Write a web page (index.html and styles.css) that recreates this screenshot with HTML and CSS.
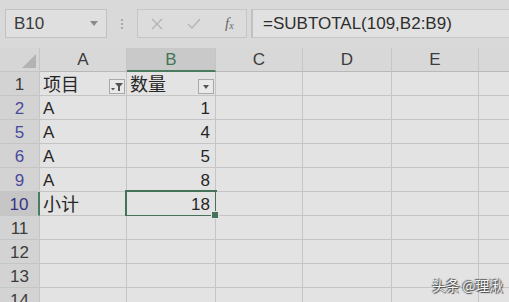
FILE: index.html
```html
<!DOCTYPE html>
<html lang="zh">
<head>
<meta charset="utf-8">
<link rel="stylesheet" href="styles.css">
</head>
<body>
<div class="app">
  <div class="toolbar">
    <div class="namebox">
      <span class="name">B10</span>
      <svg class="caret" width="8" height="5" viewBox="0 0 8 5"><path d="M0 0h8L4 5z" fill="#8a8a8a"/></svg>
    </div>
    <div class="dots"><i></i><i></i><i></i></div>
    <div class="fxbox">
      <svg class="ic" width="12" height="12" viewBox="0 0 12 12"><path d="M1 1l10 10M11 1L1 11" stroke="#b4b4b4" stroke-width="1.4" fill="none"/></svg>
      <svg class="ic" width="14" height="11" viewBox="0 0 14 11"><path d="M1 6l4 4 8-9" stroke="#b4b4b4" stroke-width="1.4" fill="none"/></svg>
      <span class="fx">f<sub>x</sub></span>
    </div>
    <div class="formula">=SUBTOTAL(109,B2:B9)</div>
  </div>
  <div class="sheet">
    <div class="corner"><svg width="14" height="14" viewBox="0 0 14 14"><path d="M14 0v14H0z" fill="#b3b3b3"/></svg></div>
    <div class="ch">A</div>
    <div class="ch sel">B</div>
    <div class="ch">C</div>
    <div class="ch">D</div>
    <div class="ch">E</div>
    <div class="ch last"></div>

    <div class="rh">1</div>
    <div class="c zh">项目<span class="fbtn active"><svg width="14" height="13" viewBox="0 0 14 13"><path d="M1 8h4L3 10.5z" fill="#555"/><path d="M5 3h8L10 6.5V11H8V6.5z" fill="#555"/></svg></span></div>
    <div class="c zh">数量<span class="fbtn"><svg width="14" height="13" viewBox="0 0 14 13"><path d="M4 5h6L7 9z" fill="#555"/></svg></span></div>
    <div class="c"></div><div class="c"></div><div class="c"></div><div class="c last"></div>

    <div class="rh blue">2</div>
    <div class="c">A</div><div class="c num">1</div>
    <div class="c"></div><div class="c"></div><div class="c"></div><div class="c last"></div>

    <div class="rh blue">5</div>
    <div class="c">A</div><div class="c num">4</div>
    <div class="c"></div><div class="c"></div><div class="c"></div><div class="c last"></div>

    <div class="rh blue">6</div>
    <div class="c">A</div><div class="c num">5</div>
    <div class="c"></div><div class="c"></div><div class="c"></div><div class="c last"></div>

    <div class="rh blue">9</div>
    <div class="c">A</div><div class="c num">8</div>
    <div class="c"></div><div class="c"></div><div class="c"></div><div class="c last"></div>

    <div class="rh blue selrow">10</div>
    <div class="c zh">小计</div><div class="c num active-cell">18<span class="handle"></span></div>
    <div class="c"></div><div class="c"></div><div class="c"></div><div class="c last"></div>

    <div class="rh">11</div>
    <div class="c"></div><div class="c"></div><div class="c"></div><div class="c"></div><div class="c"></div><div class="c last"></div>

    <div class="rh">12</div>
    <div class="c"></div><div class="c"></div><div class="c"></div><div class="c"></div><div class="c"></div><div class="c last"></div>

    <div class="rh">13</div>
    <div class="c"></div><div class="c"></div><div class="c"></div><div class="c"></div><div class="c"></div><div class="c last"></div>

    <div class="rh">14</div>
    <div class="c"></div><div class="c"></div><div class="c"></div><div class="c"></div><div class="c"></div><div class="c last"></div>
  </div>
  <div class="watermark">头条 @理湫</div>
</div>
</body>
</html>
```
FILE: styles.css
```css
html, body {
  margin: 0;
  padding: 0;
}
body {
  width: 509px;
  height: 302px;
  overflow: hidden;
  background: #e2e2e2;
  font-family: "Liberation Sans", "Noto Sans CJK SC", sans-serif;
  color: #262626;
}
.app {
  position: relative;
  width: 509px;
  height: 302px;
  overflow: hidden;
}
.toolbar {
  height: 48px;
  box-sizing: border-box;
  padding-top: 9px;
  display: flex;
  align-items: flex-start;
  background: #d9d9d9;
}
.namebox {
  margin-left: 5px;
  width: 102px;
  height: 29px;
  box-sizing: border-box;
  border: 1px solid #c2c2c2;
  background: #dfdfdf;
  display: flex;
  align-items: center;
  padding-left: 8px;
  padding-right: 8px;
}
.name {
  font-size: 17px;
  color: #3a3a3a;
  flex: 1;
}
.dots {
  width: 30px;
  height: 29px;
  display: flex;
  flex-direction: column;
  align-items: center;
  justify-content: center;
  gap: 2px;
}
.dots i {
  display: block;
  width: 2px;
  height: 2px;
  background: #a9a9a9;
}
.fxbox {
  width: 110px;
  height: 29px;
  box-sizing: border-box;
  border: 1px solid #c6c6c6;
  background: #dcdcdc;
  display: flex;
  align-items: center;
  padding-left: 13px;
  gap: 24px;
}
.fx {
  font-family: "Liberation Serif", serif;
  font-style: italic;
  font-size: 15px;
  color: #6a6a6a;
  margin-left: 0;
}
.fx sub {
  font-size: 10px;
  vertical-align: -1px;
}
.formula {
  margin-left: 4px;
  flex: 1;
  height: 29px;
  box-sizing: border-box;
  border: 1px solid #c6c6c6;
  border-right: none;
  border-left: 2px solid #c0c0c0;
  background: #e1e1e1;
  font-size: 17px;
  line-height: 27px;
  padding-left: 10px;
  color: #2e2e2e;
}
.sheet {
  display: grid;
  grid-template-columns: 40px 87px 89px 87px 89px 87px 1fr;
  grid-auto-rows: 24px;
  font-size: 17px;
}
.sheet > div {
  box-sizing: border-box;
  border-right: 1px solid #c5c5c5;
  border-bottom: 1px solid #c5c5c5;
}
.sheet > .last {
  border-right: none;
}
.corner {
  background: #d6d6d6;
  display: flex;
  align-items: flex-end;
  justify-content: flex-end;
  padding: 0 3px 3px 0;
}
.corner svg {
  display: block;
}
.ch {
  background: #d8d8d8;
  text-align: center;
  line-height: 24px;
  color: #3c3c3c;
  border-bottom-color: #b8b8b8 !important;
}
.ch.sel {
  background: #c9c9c9;
  color: #467458;
  border-bottom: 2px solid #4b7b60 !important;
  line-height: 23px;
}
.rh {
  background: #d3d3d3;
  text-align: center;
  color: #3c3c3c;
  line-height: 20px;
  padding-top: 3px;
}
.rh.blue {
  color: #4a4a9c;
}
.rh.selrow {
  background: #c6c6c6;
  color: #353585;
  border-right: 2px solid #4b7b60 !important;
}
.c {
  position: relative;
  background: #e3e3e3;
  padding: 3px 4px 0 3px;
  line-height: 20px;
  white-space: nowrap;
}
.c.zh {
  font-family: "Noto Sans CJK SC", sans-serif;
  font-size: 18px;
  line-height: 20px;
  padding-top: 1px;
}
.c.num {
  text-align: right;
  padding-right: 5px;
}
.fbtn {
  position: absolute;
  right: 1px;
  top: 7px;
  width: 16px;
  height: 15px;
  box-sizing: border-box;
  border: 1px solid #a9a9a9;
  background: #e9e9e9;
  display: flex;
  align-items: center;
  justify-content: center;
}
.fbtn svg {
  display: block;
}
.active-cell::after {
  content: "";
  position: absolute;
  left: -2px;
  top: -2px;
  right: -2px;
  bottom: -2px;
  border: 2px solid #45735a;
  pointer-events: none;
}
.handle {
  position: absolute;
  right: -4px;
  bottom: -4px;
  width: 6px;
  height: 6px;
  background: #45735a;
  border: 1px solid #e3e3e3;
  z-index: 2;
}
.watermark {
  position: absolute;
  left: 432px;
  top: 276px;
  font-family: "Noto Sans CJK SC", sans-serif;
  font-size: 14px;
  line-height: 18px;
  color: #f4f4f4;
  text-shadow: 0 0 1px #444, 1px 1px 1px #444, -1px -1px 1px #666;
  letter-spacing: -0.3px;
}
```
